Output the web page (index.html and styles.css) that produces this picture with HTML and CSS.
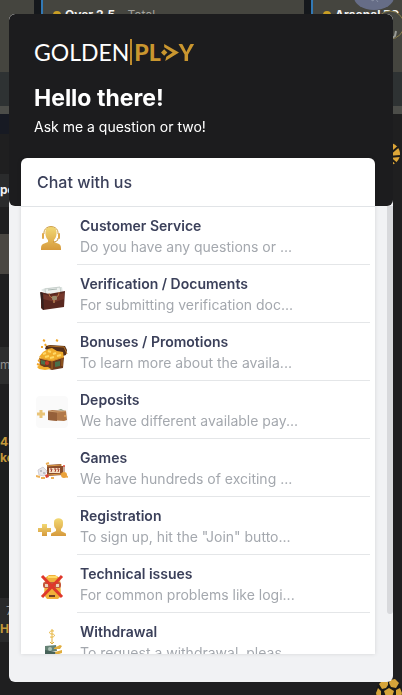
FILE: index.html
```
<!DOCTYPE html>
<html lang="en">
<head>
    <meta charset="UTF-8">
    <meta name="viewport" content="width=device-width, initial-scale=1.0">
    <title>GoldenPlay Chat</title>
    <link rel="stylesheet" href="styles.css">
</head>
<body>
    <!-- Betting page behind the chat -->
    <div class="page">
        <div class="cards">
            <div class="card card-edge"></div>
            <div class="card card-bet"><span class="dot"></span><b>Over 2.5</b> <span class="muted">- Total</span></div>
            <div class="card card-bet card-last"><span class="dot"></span><b>Arsenal FC</b>
                <svg class="avatar" width="40" height="44" viewBox="0 0 40 44">
                    <ellipse cx="20" cy="-3" rx="20" ry="13" fill="#666d87"/>
                    <path d="M16 -1l3 2 2-3 3 4" stroke="#8990a5" fill="none"/>
                    <circle cx="36" cy="25" r="14" fill="#454640" stroke="#8a7c48"/>
                    <path d="M37 39l4-3 1-5" stroke="#999b96" stroke-width="2" fill="none"/>
                </svg>
            </div>
        </div>
        <div class="rows">
            <div class="row row-navy"></div>
            <div class="row row-gap"></div>
            <div class="row row-tab"><b>po</b></div>
            <div class="row row-line"></div>
            <div class="row row-light"></div>
            <div class="row row-space"></div>
            <div class="row row-match">m</div>
            <div class="row row-break"></div>
            <div class="row row-odds"><b>43</b><b>ke</b></div>
            <div class="row row-tall"></div>
            <div class="row row-team"><span class="score">7</span><b>H</b></div>
        </div>
        <svg class="ball ball-side" width="24" height="24" viewBox="0 0 24 24">
            <circle cx="12" cy="12" r="11" fill="#dda638"/>
            <path d="M13 1l1 10 7-6M14 11l-3 4 12-1M12 15l7 6M12 15v9" stroke="#1d1b18" stroke-width="2" fill="none"/>
        </svg>
        <svg class="ball ball-corner" width="26" height="26" viewBox="0 0 26 26">
            <circle cx="13" cy="13" r="13" fill="#181818"/>
            <g fill="#d5a43a">
                <path d="M13 9l5 3-2 6h-6l-2-6z"/>
                <path d="M14 1l5-1 4 4-3 5-5-1-2-4zM12 3l-5-2-4 4 3 5 4-1 2-3zM2 9l3 3v6l-4 1-1-5zM24 9l-4 2 0 6 5 2 1-5zM7 19l4 2v5H6l-4-4zM19 19l4 2-3 4-6 1v-5z"/>
            </g>
        </svg>
    </div>

    <!-- Chat widget -->
    <div class="chat">
        <div class="chat-header">
            <div class="logo">
                <span class="logo-golden">GOLDEN</span>
                <span class="logo-bar"></span>
                <span class="logo-play">PL<svg width="18" height="17" viewBox="0 0 17 16" aria-label="A"><path d="M3 0l14 8-13 8 1-4 6-4-8-5z" fill="currentColor"/><path d="M0 8l3-3 3 3-3 3z" fill="currentColor"/></svg>Y</span>
            </div>
            <h1>Hello there!</h1>
            <p>Ask me a question or two!</p>
        </div>

        <div class="chat-scroll">
            <div class="panel">
                <h2>Chat with us</h2>
                <ul class="topics">
                    <li>
                        <button class="topic">
                            <svg class="icon" viewBox="0 0 32 32">
                                <defs>
                                    <linearGradient id="gold" x1="0" y1="0" x2="0" y2="1">
                                        <stop offset="0" stop-color="#f2d873"/>
                                        <stop offset="1" stop-color="#d69a3c"/>
                                    </linearGradient>
                                </defs>
                                <path d="M10 7c2-3 8-3 10 0 1 3 1 8-2 11v2l5 2c2 1 2 3 2 6H5c0-3 0-5 2-6l5-2v-2C9 15 9 10 10 7z" fill="url(#gold)"/>
                                <path d="M8 12C7 2 23 2 22 12" stroke="#d0a04a" fill="none"/>
                                <path d="M22 16c0 3-2 4-5 4" stroke="#c8923c" fill="none"/>
                                <rect x="6" y="11" width="2" height="6" rx="1" fill="#dfa94b"/>
                                <rect x="22" y="11" width="2" height="6" rx="1" fill="#dfa94b"/>
                            </svg>
                            <span class="topic-text"><b>Customer Service</b><span>Do you have any questions or ...</span></span>
                        </button>
                    </li>
                    <li>
                        <button class="topic">
                            <svg class="icon" viewBox="0 0 32 32">
                                <path d="M5 10l4-2 17-1 1 6-10 5z" fill="#dfe6e3"/>
                                <path d="M9 9l15-2 1 7-15 1z" fill="#eef1ef" stroke="#c8d0cc"/>
                                <path d="M12 10l9-1" stroke="#a8b5af"/>
                                <path d="M5 12l8 2 16-3-1 16-21 3-2-2z" fill="#592820"/>
                                <path d="M7 14l7 2 14-3v6l-9 3-12-3z" fill="#74372b"/>
                                <path d="M4 12l3 1 1 17-2-2z" fill="#35201d"/>
                                <path d="M13 13c0 7 10 7 10-1" stroke="#b87748" fill="none"/>
                                <rect x="16" y="16" width="5" height="4" rx="1" fill="#9a8c6d"/>
                                <path d="M18 20v3" stroke="#dfaa69"/>
                            </svg>
                            <span class="topic-text"><b>Verification / Documents</b><span>For submitting verification doc...</span></span>
                        </button>
                    </li>
                    <li>
                        <button class="topic">
                            <svg class="icon" viewBox="0 0 32 32">
                                <path d="M10 8l4-1 15 1 2 4-1 5-3 1-18-7z" fill="#55301a"/>
                                <path d="M12 8l16 1 3 7" stroke="#b06d22" fill="none"/>
                                <path d="M3 19l4-5 5-3 4-1 5 3 6 1 1 7-12 4z" fill="#f0ac2b"/>
                                <path d="M3 20l13 3 12-4-1 11-11 2-12-4z" fill="#6d3a1c"/>
                                <path d="M3 20l13 3 12-4" stroke="#dc9227" fill="none"/>
                                <path d="M16 23v8M26 20v8" stroke="#a9691f"/>
                                <path d="M5 22l4 1v4l-4-1zM19 24l5-1v5l-5 1z" fill="#49704a"/>
                                <circle cx="11" cy="25" r="2" fill="#c43a28"/>
                                <path d="M7 16l3-1M12 13l3 1M17 16l3-1M21 18l4-1M9 19l4-1M14 20l4-1" stroke="#ffd966" stroke-width="2"/>
                                <path d="M1 29l3-2 4 2 4 0 3 2-6 1-6-1z" fill="#f2ae2d"/>
                                <path d="M2 23l2-1M1 26l3 1M7 2l2 1M5 9l2 0M20 2l2 1M9 6l1 2" stroke="#f0a72a" stroke-width="2"/>
                            </svg>
                            <span class="topic-text"><b>Bonuses / Promotions</b><span>To learn more about the availa...</span></span>
                        </button>
                    </li>
                    <li>
                        <button class="topic">
                            <svg class="icon" viewBox="0 0 32 32">
                                <rect width="32" height="32" rx="4" fill="#fafafa"/>
                                <path d="M5 14v8M1 18h8" stroke="#e9c478" stroke-width="3"/>
                                <path d="M22 14l3-1 4 2z" fill="#8fa38b"/>
                                <path d="M12 15l4-1 14 1 1 9-3 1-16-1z" fill="#b0784a"/>
                                <path d="M12 15l9 1v9l-9-1z" fill="#96603a"/>
                                <path d="M12 15l9 1 9-1" stroke="#cc9c6c" fill="none"/>
                                <circle cx="29" cy="20" r="1" fill="#e0a35c"/>
                            </svg>
                            <span class="topic-text"><b>Deposits</b><span>We have different available pay...</span></span>
                        </button>
                    </li>
                    <li>
                        <button class="topic">
                            <svg class="icon" viewBox="0 0 32 32">
                                <path d="M11 11l14-1v2h2v9l-16 1z" fill="#8a4c2c"/>
                                <path d="M11 12l15-1M11 21l15-1" stroke="#dc9b45"/>
                                <path d="M13 14h11v5H13z" fill="#f6dfc4"/>
                                <path d="M14 15h2l-1 3M18 15h2l-1 3M21 15h2l-1 3" stroke="#a64030" fill="none"/>
                                <path d="M28 12v6" stroke="#98552e"/>
                                <circle cx="28" cy="12" r="1" fill="#df4936"/>
                                <path d="M2 16l5-3 4 4-3 5-5-1z" fill="#e9e7ea" stroke="#d2d0d6"/>
                                <circle cx="5" cy="17" r="1" fill="#b2b2b9"/><circle cx="8" cy="19" r="1" fill="#b2b2b9"/>
                                <path d="M9 21l3-1 1 3-3 1z" fill="#d84235"/>
                                <path d="M0 22l4 1M5 24h4M10 10l3-1M15 24h3M29 22l3 1" stroke="#eeb155" stroke-width="2"/>
                                <circle cx="28" cy="21" r="3" fill="#eba23a"/>
                            </svg>
                            <span class="topic-text"><b>Games</b><span>We have hundreds of exciting ...</span></span>
                        </button>
                    </li>
                    <li>
                        <button class="topic">
                            <svg class="icon" viewBox="0 0 32 32">
                                <path d="M6 12h5v4h4v4h-4v4H6v-4H2v-4h4z" fill="url(#gold)"/>
                                <path d="M18 10c0-5 9-5 9 0 0 4 0 5-2 7v2l4 2c1 0 1 1 1 3H15c0-2 0-3 1-3l4-2v-2c-2-2-2-3-2-7z" fill="url(#gold)"/>
                            </svg>
                            <span class="topic-text"><b>Registration</b><span>To sign up, hit the "Join" butto...</span></span>
                        </button>
                    </li>
                    <li>
                        <button class="topic">
                            <svg class="icon" viewBox="0 0 32 32">
                                <path d="M9 8l4-3h6l5 3 1 18-3 3H11l-3-4z" fill="#f0b03a"/>
                                <path d="M12 7h9" stroke="#ffda66" stroke-width="2"/>
                                <rect x="7" y="12" width="18" height="6" rx="2" fill="#c4573c"/>
                                <path d="M9 14h3v3H9zM20 14h3v3h-3z" fill="#ead4bf"/>
                                <path d="M13 26h6" stroke="#704025" stroke-width="2"/>
                                <path d="M6 6l20 21M26 6L6 27" stroke="#df372b" stroke-width="3"/>
                            </svg>
                            <span class="topic-text"><b>Technical issues</b><span>For common problems like logi...</span></span>
                        </button>
                    </li>
                    <li>
                        <button class="topic">
                            <svg class="icon" viewBox="0 0 32 32">
                                <path d="M18 3c-5-1-6 3-2 3s3 4-2 3M16 1v10" stroke="#e7b641" fill="none"/>
                                <path d="M16 11v4M14 14l2 2 2-2" stroke="#dfad3a" fill="none"/>
                                <path d="M9 18l11-1 1 6-12 1z" fill="#668275"/>
                                <path d="M9 22l11 2-1 4-10-2z" fill="#476259"/>
                                <circle cx="14" cy="21" r="2" fill="#abc1b4"/>
                                <path d="M18 20l6-3 2 1-2 3h-6zM19 24l7-2v3l-6 2z" fill="#e1ad3c"/>
                            </svg>
                            <span class="topic-text"><b>Withdrawal</b><span>To request a withdrawal, pleas...</span></span>
                        </button>
                    </li>
                </ul>
            </div>
            <div class="scroll-track"><div class="scroll-thumb"></div></div>
        </div>
    </div>
</body>
</html>
```
FILE: styles.css
```
* {
    box-sizing: border-box;
}
body {
    font-family: Inter, "Liberation Sans", sans-serif;
    margin: 0;
    height: 100vh;
    overflow: hidden;
    background-color: #1f1f20;
    color: #3b405a;
}

/* Page behind */
.page {
    height: 100%;
    font-size: 12px;
    color: #f2f2f2;
}
.cards {
    display: flex;
    gap: 7px;
    height: 114px;
    background-color: #15181c;
}
.card {
    background: linear-gradient(#45453f 72px, #2e3233 72px, #2e3233 106px, #4c4d49 106px);
}
.card-edge {
    width: 34px;
}
.card-bet {
    flex: 1;
    padding: 7px 10px;
    border-left: 2px solid #3279b5;
}
.card-last {
    flex: none;
    width: 91px;
    position: relative;
    white-space: nowrap;
    overflow: hidden;
}
.dot {
    display: inline-block;
    width: 8px;
    height: 8px;
    margin-right: 4px;
    border-radius: 50%;
    background-color: #c99e24;
}
.muted {
    color: #a2a29e;
}
.avatar {
    position: absolute;
    top: 0;
    right: 8px;
    overflow: visible;
}
.rows {
    width: 34px;
    font-size: 12px;
}
.row {
    overflow: hidden;
    white-space: nowrap;
}
.row b {
    display: block;
}
.row-navy {
    height: 20px;
    background-color: #171a23;
}
.row-gap {
    height: 40px;
}
.row-tab {
    height: 33px;
    padding-top: 8px;
    background-color: #2a2b2c;
}
.row-line {
    height: 27px;
}
.row-light {
    height: 40px;
    background-color: #4a4742;
}
.row-space {
    height: 73px;
}
.row-match {
    height: 37px;
    padding-top: 10px;
    background-color: #2d2e2e;
    color: #909090;
}
.row-break {
    height: 46px;
}
.row-odds {
    height: 40px;
    padding-top: 4px;
    line-height: 16px;
    color: #c4993a;
}
.row-tall {
    height: 128px;
    background-color: #1b1d1d;
}
.row-team {
    height: 44px;
    padding-top: 4px;
    line-height: 18px;
    background-color: #292a2b;
    color: #c4993a;
}
.score {
    display: block;
    padding-left: 6px;
    color: #999999;
}
.ball {
    position: absolute;
}
.ball-side {
    top: 142px;
    right: 1px;
}
.ball-corner {
    right: 0;
    bottom: -10px;
}

/* Chat widget */
.chat {
    position: fixed;
    top: 14px;
    right: 9px;
    bottom: 13px;
    left: 9px;
    display: flex;
    flex-direction: column;
    padding-bottom: 28px;
    border-radius: 6px;
    background-color: #f1f2f4;
    overflow: hidden;
}
.chat-header {
    margin-bottom: -48px;
    padding: 24px 25px 69px;
    border-radius: 6px;
    background-color: #1c1c1e;
    color: #ffffff;
}
.logo {
    display: flex;
    align-items: center;
    height: 28px;
    font-family: Lato, sans-serif;
    font-size: 23px;
    line-height: 28px;
}
.logo-bar {
    width: 2px;
    height: 26px;
    margin: 0 2px 0 1px;
    background-color: #bd8b2d;
}
.logo-play {
    font-weight: 900;
    color: #c9962f;
}
.chat-header h1 {
    margin: 16px 0 0;
    font-size: 23px;
    line-height: 32px;
}
.chat-header p {
    margin: 3px 0 0;
    font-size: 14px;
    line-height: 20px;
}
.chat-scroll {
    flex: 1;
    display: flex;
    min-height: 0;
}
.panel {
    flex: 1;
    display: flex;
    flex-direction: column;
    min-width: 0;
    margin: 0 12px;
    border-radius: 6px 6px 0 0;
    background-color: #ffffff;
    box-shadow: 0 0 4px rgba(0,0,0,0.12);
}
.panel h2 {
    margin: 0;
    padding: 12px 16px;
    border-bottom: 1px solid #e1e4e7;
    font-size: 16px;
    font-weight: 500;
    line-height: 24px;
}
.topics {
    flex: 1;
    min-height: 0;
    margin: 0;
    padding: 0;
    list-style: none;
    overflow: hidden;
}
.topic {
    display: flex;
    gap: 9px;
    width: 100%;
    padding: 0 5px 0 15px;
    border: none;
    background: none;
    font-family: inherit;
    font-size: 14px;
    line-height: 21px;
    text-align: left;
    color: #3b405a;
    cursor: pointer;
}
.icon {
    flex: none;
    width: 32px;
    height: 32px;
    margin-top: 15px;
}
.topic-text {
    flex: 1;
    min-width: 0;
    padding: 8px 3px 7px;
    border-bottom: 1px solid #e4e6e8;
}
.topic-text b {
    display: block;
    font-weight: 600;
}
.topic-text span {
    display: block;
    overflow: hidden;
    white-space: nowrap;
    color: #a4a8ae;
}
.scroll-track {
    width: 6px;
    padding-top: 48px;
}
.scroll-thumb {
    height: 91%;
    border-radius: 0 0 3px 3px;
    background-color: #d8d9dc;
}
```
